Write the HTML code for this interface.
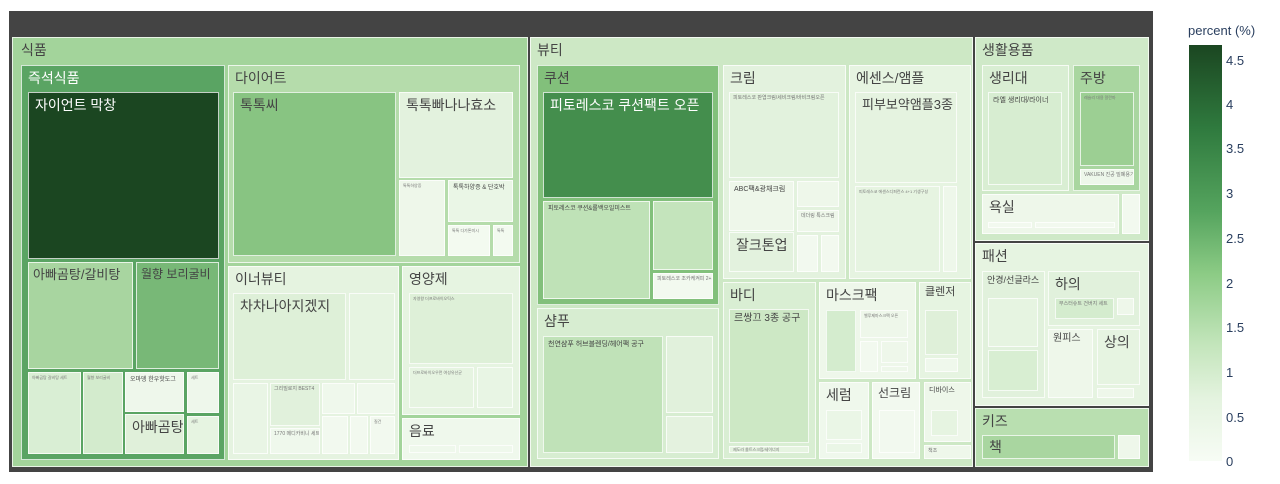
<!DOCTYPE html>
<html><head><meta charset="utf-8"><style>
body{margin:0;width:1280px;height:484px;background:#fff;overflow:hidden;font-family:"Liberation Sans","Noto Sans CJK KR",sans-serif;position:relative}
.b{position:absolute;box-sizing:border-box;border:1px solid rgba(255,255,255,.75);color:#444;white-space:nowrap;overflow:hidden;line-height:1;padding:5px 0 0 6px}
.w{color:#fff}
.L{font-size:14px}
.M{font-size:11px;padding:4px 0 0 5px}
.S{font-size:7px;padding:4px 0 0 4px}
.T{font-size:4px;padding:3px 0 0 3px;color:#777}
.cb{position:absolute;left:1189px;top:45px;width:33px;height:416px;background:linear-gradient(#1b4621,#2f7a3e 20%,#55a45e 40%,#8ccb85 55%,#c3e5bb 72%,#e4f3df 85%,#f7fcf5)}
.t{position:absolute;left:1226px;font-size:13px;color:#2a3f5f;font-family:"Liberation Sans",sans-serif}
</style></head><body>
<div style="position:absolute;left:9px;top:11px;width:1144px;height:461px;background:#444"></div>

<div class="b L" style="left:12px;top:37px;width:516px;height:430px;background:#a3d49b;padding-left:8px">식품</div>
<div class="b L w" style="left:21px;top:65px;width:204px;height:395px;background:#5aa463">즉석식품</div>
<div class="b L w" style="left:28px;top:92px;width:191px;height:167px;background:#1b4621">자이언트 막창</div>
<div class="b L" style="left:28px;top:262px;width:105px;height:107px;background:#a8d5a0;font-size:13px;padding-left:4px">아빠곰탕/갈비탕</div>
<div class="b L" style="left:136px;top:262px;width:83px;height:107px;background:#78b877;font-size:12px;padding-left:4px">월향 보리굴비</div>
<div class="b T" style="left:28px;top:372px;width:53px;height:82px;background:#d9eed4">아빠곰탕 갈비탕 세트</div>
<div class="b T" style="left:83px;top:372px;width:40px;height:82px;background:#d3ebcd">월향 보리굴비</div>
<div class="b S" style="left:125px;top:372px;width:59px;height:40px;background:#eef7eb;font-size:6px">오마뎅 한우핫도그</div>
<div class="b L" style="left:125px;top:414px;width:59px;height:40px;background:#e0f0da">아빠곰탕</div>
<div class="b T" style="left:187px;top:372px;width:32px;height:41px;background:#eef7eb">세트</div>
<div class="b T" style="left:187px;top:416px;width:32px;height:38px;background:#e6f4e1">세트</div>

<div class="b L" style="left:228px;top:65px;width:292px;height:198px;background:#b5dcab">다이어트</div>
<div class="b L" style="left:233px;top:92px;width:163px;height:164px;background:#88c482">톡톡씨</div>
<div class="b L" style="left:399px;top:92px;width:114px;height:86px;background:#e3f2de">톡톡빠나나효소</div>
<div class="b T" style="left:399px;top:180px;width:46px;height:76px;background:#eef7ea">톡톡하양증</div>
<div class="b S" style="left:448px;top:180px;width:65px;height:42px;background:#eaf6e6;font-size:6px">톡톡하양증 &amp; 단호박</div>
<div class="b T" style="left:448px;top:225px;width:42px;height:31px;background:#f3faf0">톡톡 다가톤미시</div>
<div class="b T" style="left:493px;top:225px;width:20px;height:31px;background:#f3faf0">톡톡</div>

<div class="b L" style="left:228px;top:266px;width:171px;height:194px;background:#e5f3e0">이너뷰티</div>
<div class="b L" style="left:233px;top:293px;width:113px;height:87px;background:#def0d8">차차나아지겠지</div>
<div class="b T" style="left:349px;top:293px;width:46px;height:87px;background:#e6f4e1"></div>
<div class="b T" style="left:233px;top:383px;width:35px;height:71px;background:#e9f5e5"></div>
<div class="b T" style="left:270px;top:383px;width:50px;height:43px;background:#e1f1dc;font-size:5px">그리밀로지 BEST4</div>
<div class="b T" style="left:270px;top:428px;width:50px;height:26px;background:#eff8ec;font-size:5px">1770 메디카비니 세트</div>
<div class="b T" style="left:322px;top:383px;width:33px;height:31px;background:#eff8ec"></div>
<div class="b T" style="left:357px;top:383px;width:38px;height:31px;background:#eff8ec"></div>
<div class="b T" style="left:322px;top:416px;width:26px;height:38px;background:#f2f9ef"></div>
<div class="b T" style="left:350px;top:416px;width:18px;height:38px;background:#f2f9ef"></div>
<div class="b T" style="left:370px;top:416px;width:25px;height:38px;background:#f2f9ef">질건</div>

<div class="b L" style="left:402px;top:266px;width:118px;height:149px;background:#e6f4e1">영양제</div>
<div class="b T" style="left:409px;top:293px;width:104px;height:71px;background:#def0d8">자영왕 더프로바이오틱스</div>
<div class="b T" style="left:409px;top:367px;width:65px;height:41px;background:#e6f4e1">더프로바이오우먼 여성유산균</div>
<div class="b T" style="left:477px;top:367px;width:36px;height:41px;background:#e8f5e4"></div>
<div class="b L" style="left:402px;top:418px;width:118px;height:42px;background:#eff8ec">음료</div>
<div class="b" style="left:409px;top:445px;width:47px;height:8px;background:#eff8ec"></div>
<div class="b" style="left:459px;top:445px;width:54px;height:8px;background:#eff8ec"></div>

<div class="b L" style="left:530px;top:37px;width:443px;height:430px;background:#cde8c5">뷰티</div>
<div class="b L" style="left:537px;top:65px;width:182px;height:240px;background:#82c07b">쿠션</div>
<div class="b L w" style="left:543px;top:92px;width:170px;height:106px;background:#448e4d">피토레스코 쿠션팩트 오픈</div>
<div class="b S" style="left:543px;top:201px;width:107px;height:98px;background:#bfe2b7;font-size:6px">피토레스코 쿠션&amp;롤백오일미스트</div>
<div class="b T" style="left:653px;top:201px;width:60px;height:69px;background:#c4e4bc"></div>
<div class="b T" style="left:653px;top:273px;width:60px;height:26px;background:#f2f9ef;font-size:5px">피토레스코 조카케켜피 2+1</div>
<div class="b L" style="left:537px;top:308px;width:182px;height:151px;background:#d7edd1">샴푸</div>
<div class="b S" style="left:543px;top:336px;width:120px;height:117px;background:#c0e2b8">천연샴푸 허브블렌딩/헤어팩 공구</div>
<div class="b T" style="left:666px;top:336px;width:47px;height:77px;background:#e1f1dc"></div>
<div class="b T" style="left:666px;top:416px;width:47px;height:37px;background:#e4f2df"></div>

<div class="b L" style="left:723px;top:65px;width:123px;height:214px;background:#e3f2de">크림</div>
<div class="b T" style="left:729px;top:92px;width:110px;height:86px;background:#e2f2dd;font-size:5px">피토레스코 판엽크림/세비크림/바비크림오픈</div>
<div class="b S" style="left:729px;top:181px;width:65px;height:50px;background:#eef7ea">ABC팩&amp;광채크림</div>
<div class="b T" style="left:797px;top:181px;width:42px;height:26px;background:#eef7ea"></div>
<div class="b T" style="left:797px;top:210px;width:42px;height:22px;background:#eef7ea;font-size:5px">데더링 톡스크림</div>
<div class="b L" style="left:729px;top:232px;width:65px;height:40px;background:#e3f2de">잘크톤업</div>
<div class="b T" style="left:797px;top:235px;width:21px;height:37px;background:#f2f9ef"></div>
<div class="b T" style="left:821px;top:235px;width:18px;height:37px;background:#f2f9ef"></div>
<div class="b L" style="left:849px;top:65px;width:122px;height:214px;background:#e6f4e1">에센스/앰플</div>
<div class="b L" style="left:855px;top:92px;width:102px;height:91px;background:#e5f3e0;font-size:13px">피부보약앰플3종</div>
<div class="b T" style="left:855px;top:186px;width:85px;height:86px;background:#e6f4e1">피토레스코 에센스디퍼런스 4+1 기생구성</div>
<div class="b T" style="left:943px;top:186px;width:14px;height:86px;background:#eef7ea"></div>

<div class="b L" style="left:723px;top:282px;width:93px;height:177px;background:#d9eed3">바디</div>
<div class="b S" style="left:729px;top:309px;width:80px;height:134px;background:#cde8c5;font-size:10px">르쌍끄 3종 공구</div>
<div class="b T" style="left:729px;top:446px;width:80px;height:7px;background:#e6f4e1;padding-top:1px">제도라 쏠트스크럽/세이너지</div>
<div class="b L" style="left:819px;top:282px;width:97px;height:97px;background:#eef7ea">마스크팩</div>
<div class="b T" style="left:826px;top:310px;width:30px;height:62px;background:#d4ecce"></div>
<div class="b T" style="left:860px;top:310px;width:48px;height:28px;background:#eef7ea">벨루제마스크팩 오픈</div>
<div class="b T" style="left:860px;top:341px;width:18px;height:31px;background:#f2f9ef"></div>
<div class="b T" style="left:881px;top:341px;width:27px;height:22px;background:#eef7ea"></div>
<div class="b T" style="left:881px;top:366px;width:27px;height:6px;background:#eef7ea"></div>
<div class="b M" style="left:919px;top:282px;width:52px;height:97px;background:#e6f4e1">클렌저</div>
<div class="b T" style="left:925px;top:310px;width:33px;height:45px;background:#dff0d9"></div>
<div class="b T" style="left:925px;top:358px;width:33px;height:14px;background:#eff8ec"></div>
<div class="b L" style="left:819px;top:382px;width:50px;height:77px;background:#eff8ec">세럼</div>
<div class="b T" style="left:826px;top:410px;width:36px;height:30px;background:#eaf6e6"></div>
<div class="b T" style="left:826px;top:443px;width:36px;height:10px;background:#eaf6e6"></div>
<div class="b M" style="left:872px;top:382px;width:48px;height:77px;background:#f2f9ef;font-size:12px">선크림</div>
<div class="b T" style="left:879px;top:410px;width:36px;height:43px;background:#f2f9ef"></div>
<div class="b S" style="left:924px;top:382px;width:47px;height:60px;background:#eef7ea">디바이스</div>
<div class="b T" style="left:931px;top:410px;width:27px;height:26px;background:#e6f4e1"></div>
<div class="b T" style="left:924px;top:445px;width:47px;height:14px;background:#eef7ea;font-size:5px">책조</div>

<div class="b L" style="left:975px;top:37px;width:174px;height:204px;background:#cfe9c8">생활용품</div>
<div class="b L" style="left:982px;top:65px;width:87px;height:126px;background:#d9eed3">생리대</div>
<div class="b S" style="left:988px;top:92px;width:74px;height:93px;background:#d7edd1">라엘 생리대/라이너</div>
<div class="b L" style="left:1073px;top:65px;width:67px;height:126px;background:#a9d6a0">주방</div>
<div class="b T" style="left:1080px;top:92px;width:54px;height:74px;background:#9ccf93">레슬리 대용 알란마</div>
<div class="b T" style="left:1080px;top:169px;width:54px;height:16px;background:#edf7ea;font-size:5px">VAKUEN 진공 밀폐용기</div>
<div class="b L" style="left:982px;top:194px;width:137px;height:40px;background:#eef7ea">욕실</div>
<div class="b T" style="left:988px;top:222px;width:44px;height:6px;background:#f2f9ef"></div>
<div class="b T" style="left:1035px;top:222px;width:80px;height:6px;background:#f2f9ef"></div>
<div class="b T" style="left:1122px;top:194px;width:18px;height:40px;background:#f2f9ef"></div>

<div class="b L" style="left:975px;top:243px;width:174px;height:163px;background:#e6f4e1">패션</div>
<div class="b S" style="left:982px;top:271px;width:63px;height:127px;background:#e1f1dc;font-size:9px">안경/선글라스</div>
<div class="b T" style="left:988px;top:298px;width:50px;height:49px;background:#e6f4e1"></div>
<div class="b T" style="left:988px;top:350px;width:50px;height:41px;background:#d8eed2"></div>
<div class="b L" style="left:1048px;top:271px;width:92px;height:55px;background:#e1f1dc">하의</div>
<div class="b T" style="left:1055px;top:298px;width:59px;height:21px;background:#d4ecce;font-size:5px">부스터슈트 건버지 세트</div>
<div class="b T" style="left:1117px;top:298px;width:17px;height:17px;background:#eef7ea"></div>
<div class="b S" style="left:1048px;top:329px;width:45px;height:69px;background:#eef7ea;font-size:10px">원피스</div>
<div class="b L" style="left:1097px;top:329px;width:43px;height:56px;background:#e6f4e1">상의</div>
<div class="b T" style="left:1097px;top:388px;width:37px;height:10px;background:#eef7ea"></div>

<div class="b L" style="left:975px;top:408px;width:174px;height:59px;background:#b9dfb0">키즈</div>
<div class="b L" style="left:982px;top:435px;width:133px;height:24px;background:#a9d6a0;padding-top:4px">책</div>
<div class="b T" style="left:1118px;top:435px;width:22px;height:24px;background:#eef7ea"></div>

<div style="position:absolute;left:1188px;top:23px;font-size:13px;color:#2a3f5f">percent (%)</div>
<div class="cb"></div>
<div class="t" style="top:53px">4.5</div>
<div class="t" style="top:97px">4</div>
<div class="t" style="top:141px">3.5</div>
<div class="t" style="top:186px">3</div>
<div class="t" style="top:231px">2.5</div>
<div class="t" style="top:276px">2</div>
<div class="t" style="top:320px">1.5</div>
<div class="t" style="top:365px">1</div>
<div class="t" style="top:410px">0.5</div>
<div class="t" style="top:454px">0</div>
</body></html>
